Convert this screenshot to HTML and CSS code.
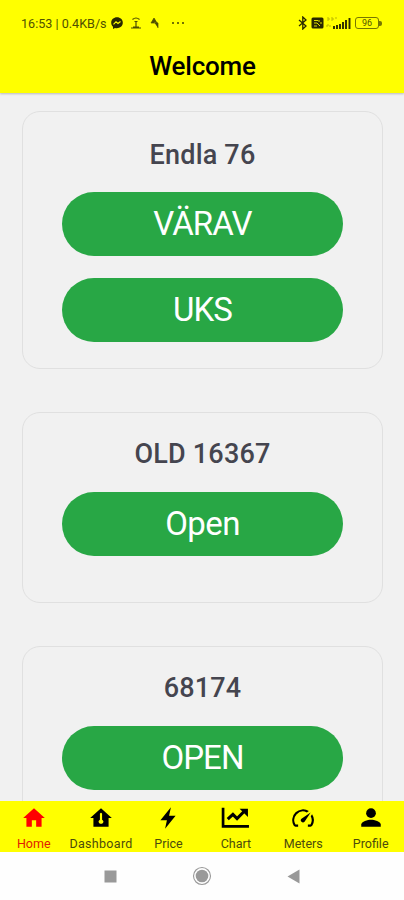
FILE: index.html
```
<!DOCTYPE html>
<html lang="en">
<head>
<meta charset="utf-8">
<title>Welcome</title>
<link rel="stylesheet" href="styles.css">
</head>
<body>
<div class="screen">
  <header class="header">
    <div class="status">
      <span class="clock">16:53 | 0.4KB/s</span>
      <svg class="messenger" width="12" height="12" viewBox="0 0 12 12"><path d="M6 .3C2.700.3.2 2.600.2 5.700c0 1.600.7 3 1.800 4V12l2-1.100c3.900 1 7.800-1.400 7.800-5.200C11.800 2.600 9.300.3 6 .3Z" fill="#292900"/><path d="M2.500 7.300 5 4.700l2 1.700 2.500-1.900" fill="none" stroke="#ff0" stroke-width="1.200"/></svg>
      <svg class="cast" width="12" height="12" viewBox="0 0 12 12"><path d="M1 11h10M6 10V5M3 10h6M4.500 4.500h3M2.500 2.500Q6-.5 9.500 2.500" fill="none" stroke="#4f4f00" stroke-width="1.200"/></svg>
      <svg class="arrow" width="10" height="11" viewBox="0 0 10 11"><path d="M4 0 1 5h6zM4 4l4 1v5" fill="#4f4f00" stroke="#4f4f00" stroke-width=".7"/></svg>
      <svg class="dots" width="14" height="4" viewBox="0 0 14 4"><path d="M1 1h2v2H1zM6 1h2v2H6zM11 1h2v2h-2z" fill="#737300"/></svg>
      <div class="system">
        <svg width="10" height="14" viewBox="0 0 10 14"><path d="m1 4 7 6-3.200 3V1L8 4l-7 6" fill="none" stroke="#292900" stroke-width="1.300"/></svg>
        <svg class="nfc" width="13" height="12" viewBox="0 0 13 12"><rect x=".5" y=".5" width="12" height="11" rx="1.500" fill="#292900"/><path d="M3 3.500h4M3 6h3l3 3M8 3v2M3 9h3M9 6h2" stroke="#dede00" fill="none"/></svg>
        <svg class="signal" width="25" height="14" viewBox="0 0 25 14"><path d="M1 2h2v2H1M5 2h2v2H5M9 2h2M1 11V9h2M4 11V9" fill="none" stroke="#bbb900"/><path d="M8 13v-3M11 13v-4M14 13V8M17 13V6M20 13V4M23.500 13V2" stroke="#292900" stroke-width="1.900"/></svg>
        <span class="battery">96</span><i class="battery-tip"></i>
      </div>
    </div>
    <h1 class="title">Welcome</h1>
  </header>
  <main class="content">
    <section class="card first">
      <h2>Endla 76</h2>
      <button>VÄRAV</button>
      <button>UKS</button>
    </section>
    <section class="card single">
      <h2>OLD 16367</h2>
      <button class="open">Open</button>
    </section>
    <section class="card single">
      <h2>68174</h2>
      <button>OPEN</button>
    </section>
  </main>
  <nav class="tabs">
    <a class="tab active"><svg viewBox="0 0 24 24"><path d="M10 20v-6h4v6h5v-8h3L12 3 2 12h3v8z"/></svg><span>Home</span></a>
    <a class="tab dashboard"><svg viewBox="0 0 24 24"><path fill-rule="evenodd" d="M12 3 2 12h3v8h14v-8h3zM11 8q1-1.500 2 0v5.500q2 1.200.8 3-1.800 1.800-3.600 0-1.200-1.800.8-3z"/></svg><span>Dashboard</span></a>
    <a class="tab"><svg viewBox="0 0 24 24"><path d="M14.700 2 5 14h6L9.300 22 19 10h-6z"/></svg><span>Price</span></a>
    <a class="tab"><svg class="wide" viewBox="0 0 28 24"><path d="M2 2v18h25" fill="none" stroke="#000" stroke-width="2.600"/><path d="M6.500 13 11.500 8.500l4 4 7-7" fill="none" stroke="#000" stroke-width="3"/><path d="M18 3h8v8z"/></svg><span>Chart</span></a>
    <a class="tab"><svg viewBox="0 0 24 24"><path d="m20.380 8.570-1.230 1.850a8 8 0 0 1-.22 7.580H5.070A8 8 0 0 1 15.580 6.850l1.850-1.230A10 10 0 0 0 3.350 19a2 2 0 0 0 1.720 1h13.850a2 2 0 0 0 1.740-1 10 10 0 0 0-.27-10.440zM10.590 15.410a2 2 0 0 0 2.830 0l5.660-8.490-8.490 5.660a2 2 0 0 0 0 2.830z"/><path class="gap" d="M7.500 17h9v4h-9z"/></svg><span>Meters</span></a>
    <a class="tab"><svg viewBox="0 0 24 24"><circle cx="12" cy="7.500" r="4.500"/><path d="M3 20v-2c0-3 6-4.500 9-4.500s9 1.500 9 4.500v2z"/></svg><span>Profile</span></a>
  </nav>
  <footer class="navigation">
    <svg width="13" height="13" viewBox="0 0 13 13"><path d="M.5.5h12v12H.5z"/></svg>
    <svg width="20" height="20" viewBox="0 0 20 20"><circle cx="10" cy="10" r="6.300"/><circle cx="10" cy="10" r="8.500" fill="none" stroke="#999" stroke-width="1.100"/></svg>
    <svg width="13" height="15" viewBox="0 0 13 15"><path d="M12.500.5v14L.5 7.500z"/></svg>
  </footer>
</div>
</body>
</html>
```
FILE: styles.css
```
* { box-sizing: border-box; }
body { margin: 0; font-family: Roboto, "Liberation Sans", sans-serif; }
.screen { width: 404px; height: 900px; display: flex; flex-direction: column; overflow: hidden; background: #f1f1f1; }
.header { height: 93px; flex: none; background: #ff0; box-shadow: 0 1px 2px #bbb; }
.status { height: 45px; padding: 1px 22px 0 21px; display: flex; align-items: center; color: #515100; }
.clock { width: 86px; font-size: 12.600px; white-space: nowrap; }
.messenger { margin-left: 4px; }
.cast { margin-left: 7px; }
.arrow { margin-left: 8px; }
.dots { margin-left: 11px; }
.system { margin-left: auto; display: flex; align-items: center; }
.nfc { margin-left: 3px; }
.signal { margin-left: 2px; }
.battery { width: 24px; height: 12px; margin-left: 4px; border: 1.500px solid #777700; border-radius: 3px; font-size: 9px; line-height: 10px; text-align: center; }
.battery-tip { width: 3px; height: 5px; background: #777700; border-radius: 0 2px 2px 0; }
h1, h2 { margin: 0; text-align: center; }
.title { font-size: 26px; font-weight: 500; line-height: 42px; letter-spacing: -.2px; padding-left: 1px; }
.content { flex: 1; min-height: 0; overflow: hidden; padding: 18px 21px 0 22px; }
.card { display: flex; flex-direction: column; align-items: center; gap: 22px; padding: 26px 0; border: 1px solid #e0e0e0; border-radius: 18px; margin-bottom: 43px; }
.single { height: 191px; padding-top: 25px; }
h2 { color: #45454f; font-size: 27px; font-weight: 500; line-height: 32px; height: 32px; letter-spacing: .2px; }
.first h2 { line-height: 34px; }
button { width: 281px; height: 64px; flex: none; border: 0; border-radius: 32px; background: #28a745; color: #fff; font-family: inherit; font-size: 33px; font-weight: 400; padding: 0; line-height: 64px; letter-spacing: -.9px; }
.open { letter-spacing: -.6px; }
.tabs { height: 51px; flex: none; background: #ff0; display: grid; grid-template-columns: repeat(6, 67.400px); padding-top: 4px; }
.tab { display: flex; flex-direction: column; align-items: center; color: #4b4b0c; font-size: 12.500px; line-height: 16px; }
.tab svg { width: 26px; height: 26px; fill: #000; }
.tab .wide { width: 29px; }
.tab .gap { fill: #ff0; }
.tab span { margin-top: 5px; }
.dashboard span { letter-spacing: .3px; }
.tab.active { color: #e11b00; }
.tab.active svg { fill: #f00; }
.navigation { height: 48px; flex: none; background: #fefefe; display: flex; justify-content: center; align-items: center; gap: 75px; fill: #999; }
```
